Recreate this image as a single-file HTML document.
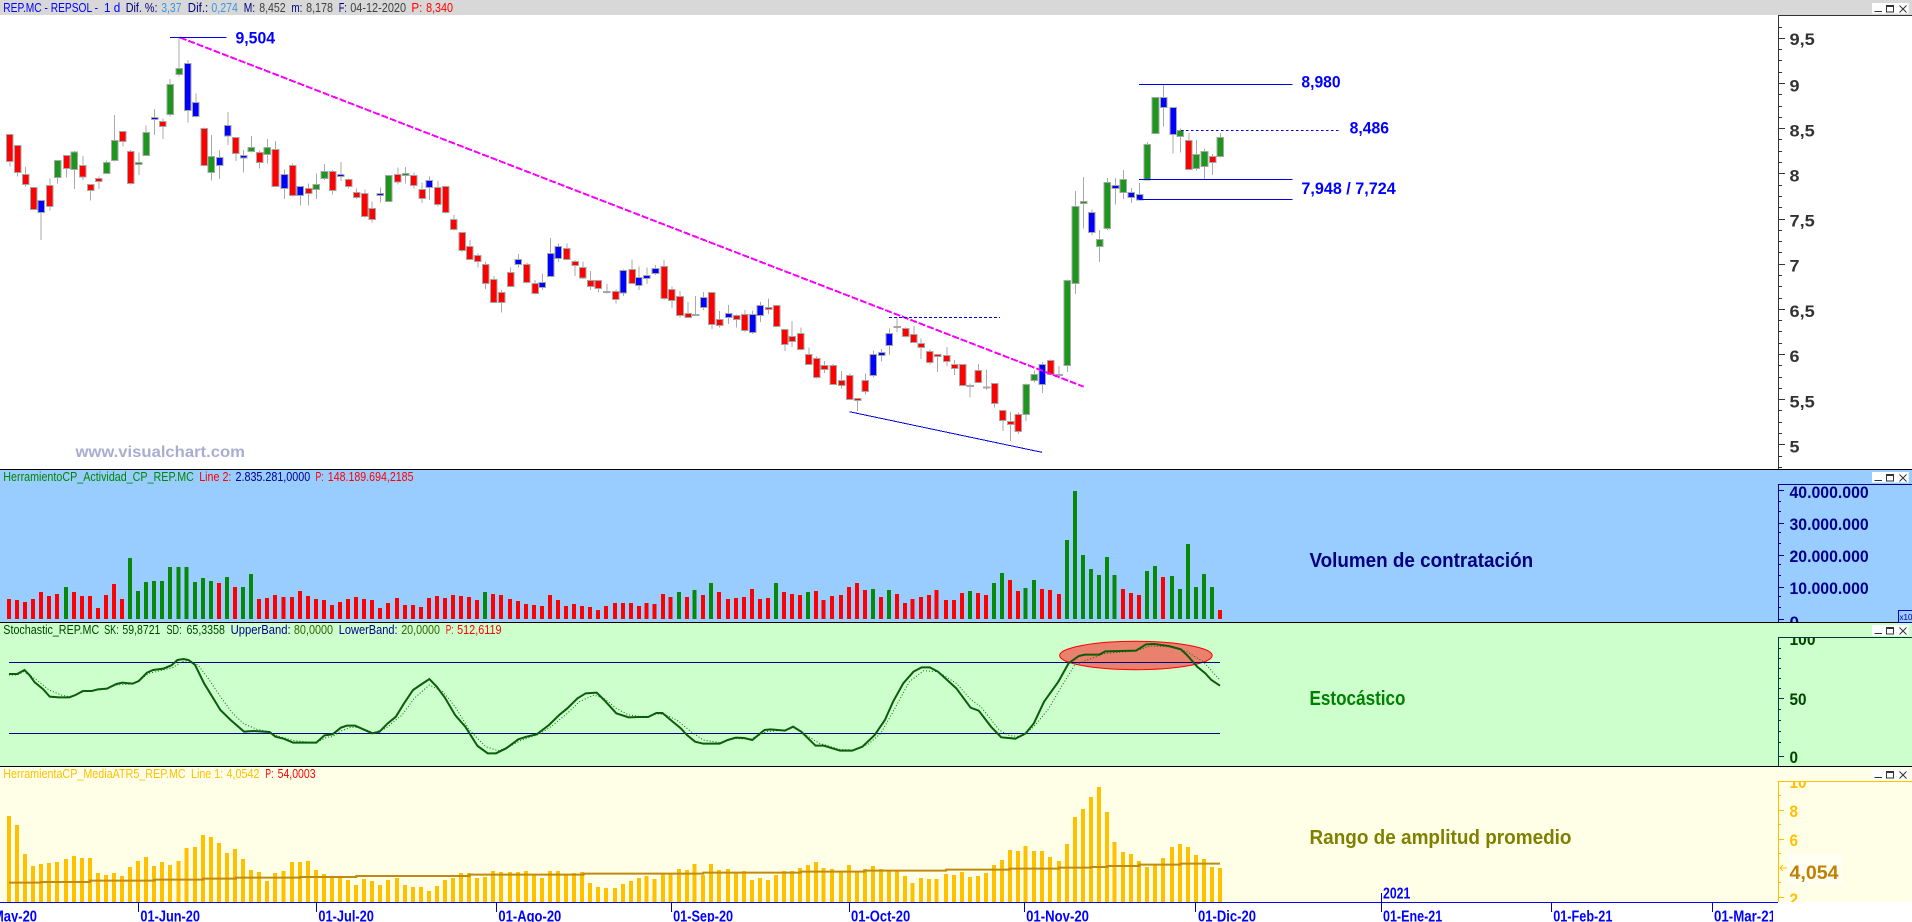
<!DOCTYPE html>
<html lang="es">
<head>
<meta charset="utf-8">
<title>REP.MC - REPSOL</title>
<style>
html,body{margin:0;padding:0;background:#fff;width:1912px;height:922px;overflow:hidden}
svg{display:block;font-family:"Liberation Sans",sans-serif}
svg path{vector-effect:non-scaling-stroke}
.w{fill:none;stroke:#aaa;stroke-width:1;shape-rendering:crispEdges}
.r,.g,.b,.d{stroke:#a6a6a6;stroke-width:1;shape-rendering:crispEdges}
.r{fill:#f00}.g{fill:#1c961c}.b{fill:#00f}.d{fill:#aaa}
.vr,.vg,.ar{fill:none;stroke-width:4;shape-rendering:crispEdges}
.vr{stroke:#f00}.vg{stroke:#088808}.ar{stroke:#ffc000}
.t{font-size:12.5px}
.big{font-size:17px;font-weight:700}
.dt{font-size:16px;font-weight:700;fill:#00f}
.lab{font-size:20px;font-weight:700}
</style>
</head>
<body>
<svg xmlns="http://www.w3.org/2000/svg" width="1912" height="922" viewBox="0 0 1912 922">
<defs>
<clipPath id="c100"><rect x="1780" y="638" width="100" height="30"/></clipPath>
<clipPath id="c10"><rect x="1780" y="782" width="100" height="30"/></clipPath>
<clipPath id="c0"><rect x="1780" y="600" width="100" height="22"/></clipPath>
<clipPath id="c2"><rect x="1780" y="880" width="100" height="22"/></clipPath>
<clipPath id="cm"><rect x="1700" y="903" width="73" height="19"/></clipPath>
<g id="btn">
<rect x="1872" y="3" width="36.7" height="10.5" fill="#fff"/>
<path d="M1874.5 11.5h7.5" stroke="#333" stroke-width="1" fill="none"/>
<path d="M1886.5 5.5h7v6.5h-7zM1886.5 6.5h7" stroke="#333" stroke-width="1" fill="none"/>
<path d="M1899.5 5.5l7 7M1906.5 5.5l-7 7" stroke="#333" stroke-width="1" fill="none"/>
</g>
</defs>

<!-- backgrounds -->
<rect x="0" y="0" width="1912" height="15" fill="#d8d8d8"/>
<rect x="0" y="469" width="1912" height="153" fill="#99ccff"/>
<rect x="0" y="622" width="1912" height="144" fill="#ccffcc"/>
<rect x="0" y="766" width="1912" height="136" fill="#ffffe8"/>
<path d="M0 469.5H1912M0 622.5H1912M0 766.5H1912" stroke="#000" stroke-width="1" fill="none" shape-rendering="crispEdges"/>

<!-- title texts -->
<g class="t">
<text x="3.3" y="12" textLength="94.7" lengthAdjust="spacingAndGlyphs" fill="#0000ff">REP.MC - REPSOL -</text>
<text x="104" y="12" textLength="16.3" lengthAdjust="spacingAndGlyphs" fill="#0000ff">1 d</text>
<text x="125.7" y="12" textLength="31.8" lengthAdjust="spacingAndGlyphs" fill="#000080">Dif. %:</text>
<text x="161.2" y="12" textLength="20.4" lengthAdjust="spacingAndGlyphs" fill="#3c96e0">3,37</text>
<text x="187.8" y="12" textLength="20.4" lengthAdjust="spacingAndGlyphs" fill="#000080">Dif.:</text>
<text x="211.4" y="12" textLength="26.5" lengthAdjust="spacingAndGlyphs" fill="#3c96e0">0,274</text>
<text x="243.7" y="12" textLength="11.4" lengthAdjust="spacingAndGlyphs" fill="#000080">M:</text>
<text x="259.2" y="12" textLength="26.5" lengthAdjust="spacingAndGlyphs" fill="#404040">8,452</text>
<text x="291.4" y="12" textLength="11" lengthAdjust="spacingAndGlyphs" fill="#000080">m:</text>
<text x="306.1" y="12" textLength="26.9" lengthAdjust="spacingAndGlyphs" fill="#404040">8,178</text>
<text x="338.8" y="12" textLength="8.2" lengthAdjust="spacingAndGlyphs" fill="#000080">F:</text>
<text x="350.2" y="12" textLength="55.9" lengthAdjust="spacingAndGlyphs" fill="#404040">04-12-2020</text>
<text x="411.4" y="12" textLength="11" lengthAdjust="spacingAndGlyphs" fill="#f00">P:</text>
<text x="426.1" y="12" textLength="26.9" lengthAdjust="spacingAndGlyphs" fill="#f00">8,340</text>

<text x="3.3" y="481" textLength="190.6" lengthAdjust="spacingAndGlyphs" fill="#008800">HerramientoCP_Actividad_CP_REP.MC</text>
<text x="199.2" y="481" textLength="32.2" lengthAdjust="spacingAndGlyphs" fill="#f00">Line 2:</text>
<text x="235.5" y="481" textLength="74.7" lengthAdjust="spacingAndGlyphs" fill="#00008b">2.835.281,0000</text>
<text x="315.5" y="481" textLength="8.2" lengthAdjust="spacingAndGlyphs" fill="#f00">P:</text>
<text x="327.8" y="481" textLength="85.7" lengthAdjust="spacingAndGlyphs" fill="#f00">148.189.694,2185</text>

<text x="3.3" y="634" textLength="95.9" lengthAdjust="spacingAndGlyphs" fill="#004400">Stochastic_REP.MC</text>
<text x="104.1" y="634" textLength="14.7" lengthAdjust="spacingAndGlyphs" fill="#004400">SK:</text>
<text x="122.4" y="634" textLength="38" lengthAdjust="spacingAndGlyphs" fill="#004400">59,8721</text>
<text x="166.5" y="634" textLength="15.1" lengthAdjust="spacingAndGlyphs" fill="#004400">SD:</text>
<text x="186.5" y="634" textLength="38.4" lengthAdjust="spacingAndGlyphs" fill="#004400">65,3358</text>
<text x="230.6" y="634" textLength="60" lengthAdjust="spacingAndGlyphs" fill="#00008b">UpperBand:</text>
<text x="293.9" y="634" textLength="39.2" lengthAdjust="spacingAndGlyphs" fill="#336600">80,0000</text>
<text x="338.8" y="634" textLength="58.8" lengthAdjust="spacingAndGlyphs" fill="#00008b">LowerBand:</text>
<text x="401.2" y="634" textLength="38.8" lengthAdjust="spacingAndGlyphs" fill="#336600">20,0000</text>
<text x="445.7" y="634" textLength="7.8" lengthAdjust="spacingAndGlyphs" fill="#f00">P:</text>
<text x="457.1" y="634" textLength="44.5" lengthAdjust="spacingAndGlyphs" fill="#f00">512,6119</text>

<text x="3.3" y="778" textLength="182.4" lengthAdjust="spacingAndGlyphs" fill="#ffc000">HerramientaCP_MediaATR5_REP.MC</text>
<text x="191" y="778" textLength="32.2" lengthAdjust="spacingAndGlyphs" fill="#ffc000">Line 1:</text>
<text x="226.5" y="778" textLength="33" lengthAdjust="spacingAndGlyphs" fill="#ffc000">4,0542</text>
<text x="265.3" y="778" textLength="8.2" lengthAdjust="spacingAndGlyphs" fill="#f00">P:</text>
<text x="277.6" y="778" textLength="38" lengthAdjust="spacingAndGlyphs" fill="#f00">54,0003</text>
</g>

<!-- candles: zone 1 -->
<g transform="translate(0,0) scale(.40816,.33333)">
<path class="w" d="M24 403V500M43 436V530M63 501V560M83 562V630M101 602V720M122 535V632M141 481V550M163 465V533M182 453V567M203 468V540M222 553V602M242 530V567M261 481V522M281 345V485M301 393V440M320 450V553M340 458V525M358 377V467M379 327V405M399 355V417M417 237V350M439 112V230M460 180V368M480 280V353M500 382V497M518 405V542M538 450V537M558 336V435M578 412V483M597 450V518M616 408V457M636 452V505M655 417V491M675 423V560M697 508V597M717 490V590M736 558V617M756 550V617M775 520V597M795 492V540M815 510V583M835 486V543M854 535V565M874 565V597M894 568V653M912 604V668M932 563V608M952 525V605M975 502V554M994 501V550M1014 518V566M1034 548V609M1052 530V600M1073 543V620M1092 558V640M1112 645V692M1132 697V756"/>
<path class="r" d="M16 403h16V484h-16zM35 436h16V517h-16zM55 523h16V553h-16zM75 562h16V628h-16zM114 556h16V619h-16zM155 466h16V505h-16zM195 496h16V531h-16zM214 553h16V571h-16zM234 535h16V544h-16zM293 394h16V424h-16zM312 454h16V550h-16zM391 364h16V379h-16zM492 385h16V496h-16zM570 412h16V460h-16zM628 457h16V487h-16zM667 448h16V559h-16zM709 496h16V586h-16zM748 566h16V580h-16zM807 514h16V571h-16zM846 538h16V559h-16zM866 577h16V592h-16zM886 580h16V649h-16zM904 626h16V658h-16zM967 524h16V546h-16zM1006 526h16V556h-16zM1026 568h16V595h-16zM1065 562h16V613h-16zM1084 560h16V637h-16zM1104 658h16V688h-16zM1124 697h16V751h-16z"/>
<path class="g" d="M133 481h16V533h-16zM174 456h16V508h-16zM253 488h16V520h-16zM273 421h16V481h-16zM332 487h16V493h-16zM350 397h16V466h-16zM409 253h16V343h-16zM431 205h16V223h-16zM510 469h16V517h-16zM608 442h16V454h-16zM647 442h16V463h-16zM767 553h16V568h-16zM787 514h16V535h-16zM944 526h16V604h-16zM986 520h16V526h-16z"/>
<path class="b" d="M93 602h16V637h-16zM371 352h16V358h-16zM452 190h16V331h-16zM472 308h16V349h-16zM530 472h16V496h-16zM550 377h16V408h-16zM589 466h16V474h-16zM689 523h16V565h-16zM728 560h16V586h-16zM827 523h16V529h-16zM924 580h16V586h-16zM1044 541h16V562h-16z"/>
</g>
<!-- candles: zone 2 -->
<g transform="translate(0,240) scale(.40816,.33333)">
<path class="w" d="M1151 0V60M1171 40V83M1190 64V147M1210 108V188M1229 150V218M1251 82V140M1270 42V83M1291 67V130M1311 120V163M1329 100V148M1349 -6V110M1368 10V66M1389 10V60M1409 60V108M1428 65V117M1447 93V150M1466 120V158M1487 132V160M1509 148V190M1527 88V168M1549 58V132M1565 80V150"/>
<path class="r" d="M1143 19h16V58h-16zM1163 46h16V64h-16zM1182 73h16V130h-16zM1202 118h16V187h-16zM1221 157h16V187h-16zM1243 97h16V139h-16zM1283 73h16V127h-16zM1303 131h16V160h-16zM1381 26h16V58h-16zM1401 64h16V76h-16zM1420 83h16V114h-16zM1439 121h16V139h-16zM1458 121h16V145h-16zM1501 155h16V178h-16zM1541 89h16V130h-16z"/>
<path class="b" d="M1262 58h16V73h-16zM1321 127h16V142h-16zM1341 41h16V109h-16zM1360 20h16V55h-16zM1519 92h16V159h-16zM1557 113h16V137h-16z"/>
<path class="d" d="M1479 154h16V158h-16z"/>
</g>
<!-- candles: zone 3 -->
<g transform="translate(640,240) scale(.40816,.33333)">
<path class="w" d="M17 82V132M38 75V105M59 60V180M78 140V204M98 153V233M118 186V233M136 168V228M156 156V210M176 157V267M195 213V262M217 195V252M237 224V262M257 210V276M276 212V282M295 186V246M315 175V222M335 195V260M355 268V333M373 243V321M394 262V332M414 322V374M433 349V416M452 363V399M473 372V434M494 393V446M514 400V479M533 474V513M552 400V464M572 331V413M592 327V365M611 265V345M630 232V276M651 262V292M671 258V308M689 295V357M710 328V374M729 342V396M752 321V378M771 360V405M791 372V437M809 430V473M829 372V428M849 388V450M869 430V503M889 510V573M908 516V603M927 517V582M946 430V543M966 391V428M986 366V459M1006 358V405M1027 378V415M1047 118V396"/>
<path class="r" d="M51 80h16V175h-16zM70 149h16V181h-16zM90 170h16V227h-16zM110 221h16V232h-16zM168 158h16V253h-16zM187 238h16V257h-16zM229 226h16V238h-16zM249 224h16V272h-16zM307 203h16V208h-16zM327 197h16V260h-16zM347 268h16V313h-16zM365 290h16V304h-16zM386 280h16V328h-16zM406 344h16V373h-16zM425 356h16V412h-16zM444 376h16V388h-16zM465 376h16V433h-16zM486 421h16V436h-16zM506 406h16V478h-16zM525 476h16V482h-16zM544 422h16V454h-16zM643 266h16V289h-16zM663 283h16V307h-16zM681 310h16V323h-16zM702 335h16V367h-16zM721 344h16V349h-16zM744 347h16V365h-16zM763 374h16V385h-16zM783 373h16V436h-16zM821 392h16V427h-16zM861 431h16V490h-16zM881 512h16V541h-16zM900 545h16V553h-16zM919 524h16V574h-16zM998 362h16V403h-16z"/>
<path class="b" d="M9 106h16V115h-16zM30 85h16V100h-16zM148 173h16V203h-16zM209 221h16V233h-16zM268 224h16V278h-16zM287 196h16V226h-16zM564 344h16V406h-16zM584 338h16V346h-16zM603 280h16V316h-16zM978 373h16V433h-16z"/>
<path class="g" d="M938 434h16V523h-16zM958 404h16V421h-16zM1039 122h16V376h-16z"/>
<path class="d" d="M128 223h16V227h-16zM622 259h16V263h-16zM801 436h16V439h-16zM841 441h16V444h-16zM1019 403h16V407h-16z"/>
</g>
<!-- candles: zone 4 -->
<g transform="translate(640,0) scale(.40816,.33333)">
<path class="w" d="M1067 573V882M1087 531V686M1107 628V705M1126 690V786M1145 534V690M1165 534V614M1184 510V597M1204 564V609M1224 549V600M1243 426V542M1263 292V400M1283 253V380M1306 322V461M1324 385V458M1345 399V509M1363 420V512M1383 445V540M1403 462V525M1422 399V473"/>
<path class="g" d="M1059 619h16V850h-16zM1079 604h16V610h-16zM1118 718h16V739h-16zM1137 547h16V686h-16zM1176 538h16V577h-16zM1235 433h16V540h-16zM1255 292h16V400h-16zM1316 391h16V409h-16zM1355 463h16V505h-16zM1375 454h16V499h-16zM1414 412h16V469h-16z"/>
<path class="b" d="M1099 637h16V697h-16zM1157 556h16V566h-16zM1196 577h16V593h-16zM1216 583h16V600h-16zM1275 292h16V322h-16zM1298 322h16V403h-16z"/>
<path class="r" d="M1337 422h16V508h-16zM1395 470h16V487h-16z"/>
</g>

<!-- annotations main -->
<path d="M180 37.5L1083.7 386.7" stroke="#ff00ff" stroke-width="2" stroke-dasharray="7 2" fill="none" shape-rendering="crispEdges"/>
<path d="M170 37.5H226.5M1139 84.5H1292.4M1139 179.5H1292.4M1139 199.5H1292.4" stroke="#0000e6" stroke-width="1" fill="none" shape-rendering="crispEdges"/>
<path d="M1180.8 130.5H1339.3" stroke="#0000e6" stroke-width="1" stroke-dasharray="2.5 2.5" fill="none" shape-rendering="crispEdges"/>
<path d="M889 317.5H1000" stroke="#0000e6" stroke-width="1" stroke-dasharray="3 2" fill="none" shape-rendering="crispEdges"/>
<path d="M849.4 411.7L1042 452.3" stroke="#0000e6" stroke-width="1" fill="none" shape-rendering="crispEdges"/>
<text x="235.5" y="43.3" class="big" fill="#00f" textLength="39.5" lengthAdjust="spacingAndGlyphs">9,504</text>
<text x="1301.4" y="87.3" class="big" fill="#00f" textLength="39.2" lengthAdjust="spacingAndGlyphs">8,980</text>
<text x="1349.6" y="133.3" class="big" fill="#00f" textLength="39.4" lengthAdjust="spacingAndGlyphs">8,486</text>
<text x="1301.4" y="194" class="big" fill="#00f" textLength="94.3" lengthAdjust="spacingAndGlyphs">7,948 / 7,724</text>
<text x="75.5" y="457" font-size="16" font-weight="700" fill="#a9add0" textLength="169.4" lengthAdjust="spacingAndGlyphs">www.visualchart.com</text>

<!-- main axis -->
<path d="M1778.5 15V469M1778 15.5H1912" stroke="#333" fill="none" shape-rendering="crispEdges"/>
<path d="M1778 38.5h7M1778 83.5h7M1778 128.5h7M1778 173.5h7M1778 219.5h7M1778 264.5h7M1778 309.5h7M1778 354.5h7M1778 399.5h7M1778 444.5h7M1778 27.5h4M1778 49.5h4M1778 60.5h4M1778 72.5h4M1778 94.5h4M1778 106.5h4M1778 117.5h4M1778 139.5h4M1778 151.5h4M1778 162.5h4M1778 185.5h4M1778 196.5h4M1778 207.5h4M1778 230.5h4M1778 241.5h4M1778 252.5h4M1778 275.5h4M1778 286.5h4M1778 298.5h4M1778 320.5h4M1778 331.5h4M1778 343.5h4M1778 365.5h4M1778 377.5h4M1778 388.5h4M1778 410.5h4M1778 422.5h4M1778 433.5h4M1778 456.5h4M1778 467.5h4" stroke="#333" fill="none" shape-rendering="crispEdges"/>
<g class="big" fill="#333">
<text x="1789.5" y="45" textLength="25.3" lengthAdjust="spacingAndGlyphs">9,5</text>
<text x="1789.5" y="91.5" textLength="10" lengthAdjust="spacingAndGlyphs">9</text>
<text x="1789.5" y="136.5" textLength="25.3" lengthAdjust="spacingAndGlyphs">8,5</text>
<text x="1789.5" y="181.5" textLength="10" lengthAdjust="spacingAndGlyphs">8</text>
<text x="1789.5" y="226.5" textLength="25.3" lengthAdjust="spacingAndGlyphs">7,5</text>
<text x="1789.5" y="271.5" textLength="10" lengthAdjust="spacingAndGlyphs">7</text>
<text x="1789.5" y="317" textLength="25.3" lengthAdjust="spacingAndGlyphs">6,5</text>
<text x="1789.5" y="362" textLength="10" lengthAdjust="spacingAndGlyphs">6</text>
<text x="1789.5" y="407.5" textLength="25.3" lengthAdjust="spacingAndGlyphs">5,5</text>
<text x="1789.5" y="452.5" textLength="10" lengthAdjust="spacingAndGlyphs">5</text>
</g>

<!-- volume -->
<g transform="translate(0,460) scale(.40816,.33333)">
<path class="vr" d="M22 477V417M42 477V420M61 477V426M81 477V417M101 477V396M120 477V408M140 477V402M181 477V396M201 477V408M220 477V408M240 477V444M260 477V405M279 477V372M299 477V417M537 477V369M576 477V381M635 477V417M654 477V414M674 477V405M694 477V411M715 477V411M735 477V393M754 477V408M774 477V417M794 477V420M813 477V435M833 477V426M852 477V417M872 477V411M892 477V417M912 477V420M931 477V444M951 477V429M973 477V414M992 477V435M1012 477V435M1032 477V441M1051 477V414M1071 477V408M1090 477V414M1110 477V405M1130 477V408M1149 477V411M1169 477V420M1208 477V402M1227 477V405M1249 477V417M1269 477V423M1289 477V432M1308 477V435M1328 477V438M1348 477V405M1367 477V420M1387 477V438M1406 477V432M1426 477V438M1446 477V441M1465 477V450M1485 477V438M1507 477V429M1526 477V429M1546 477V429M1565 477V438"/>
<path class="vg" d="M162 477V381M319 477V294M338 477V393M358 477V366M377 477V363M397 477V363M417 477V321M437 477V321M457 477V321M478 477V366M497 477V354M517 477V363M556 477V351M595 477V381M615 477V342M1188 477V396"/>
</g>
<g transform="translate(640,460) scale(.40816,.33333)">
<path class="vr" d="M16 477V429M36 477V432M56 477V402M75 477V411M115 477V411M154 477V405M193 477V396M215 477V417M235 477V414M255 477V411M274 477V387M294 477V417M313 477V414M353 477V396M372 477V402M392 477V405M431 477V393M450 477V420M470 477V408M492 477V405M512 477V381M532 477V369M551 477V390M590 477V411M630 477V402M649 477V429M668 477V417M688 477V411M708 477V405M727 477V390M750 477V420M769 477V420M789 477V399M828 477V399M848 477V405M906 477V360M926 477V393M985 477V387M1004 477V390M1026 477V402M1183 477V387M1203 477V399M1222 477V405M1281 477V351M1421 477V450"/>
<path class="vg" d="M95 477V396M134 477V390M174 477V369M333 477V369M411 477V396M571 477V387M610 477V390M808 477V393M867 477V369M887 477V339M945 477V384M965 477V360M1046 477V240M1066 477V93M1085 477V285M1105 477V327M1124 477V345M1144 477V291M1163 477V345M1242 477V333M1262 477V318M1303 477V348M1323 477V387M1342 477V252M1362 477V381M1382 477V342M1401 477V381"/>
</g>
<text x="1309.5" y="567" class="lab" fill="#000080" textLength="223.7" lengthAdjust="spacingAndGlyphs">Volumen de contratación</text>
<path d="M1778.5 484V622M1778 484.5H1912" stroke="#00008b" fill="none" shape-rendering="crispEdges"/>
<path d="M1778 490.5h6M1778 523.5h6M1778 555.5h6M1778 587.5h6M1778 619.5h6M1778 501.5h3M1778 511.5h3M1778 532.5h3M1778 543.5h3M1778 564.5h3M1778 575.5h3M1778 596.5h3M1778 607.5h3" stroke="#00008b" fill="none" shape-rendering="crispEdges"/>
<g class="big" fill="#00008b">
<text x="1789.5" y="498" textLength="79.2" lengthAdjust="spacingAndGlyphs">40.000.000</text>
<text x="1789.5" y="530" textLength="79.2" lengthAdjust="spacingAndGlyphs">30.000.000</text>
<text x="1789.5" y="562" textLength="79.2" lengthAdjust="spacingAndGlyphs">20.000.000</text>
<text x="1789.5" y="594" textLength="79.2" lengthAdjust="spacingAndGlyphs">10.000.000</text>
<text x="1789.5" y="628" clip-path="url(#c0)">0</text>
</g>
<rect x="1898.5" y="610.5" width="14" height="12" fill="none" stroke="#0000c0"/>
<text x="1899.5" y="620" font-size="8" fill="#00008b">x10</text>

<!-- stochastic -->
<ellipse cx="1135.9" cy="655.5" rx="76.3" ry="14.2" fill="#ea806e" stroke="#f00" stroke-width="1"/>
<path d="M9 662.5H1220M9 733.5H1220" stroke="#00008b" fill="none" shape-rendering="crispEdges"/>
<g transform="translate(0,620) scale(.40816,.33333)" fill="none">
<path stroke="#0a6a0a" stroke-width="1" stroke-dasharray="1 2" d="M22 165 42 165 58 155 72 165 90 180 120 210 150 225 170 230 185 225 205 215 240 210 262 205 285 195 325 192 345 178 365 160 400 150 425 142 445 125 465 122 485 135 510 175 540 230 570 280 598 312 630 328 660 335 680 348 720 362 775 368 800 352 815 350 835 333 860 322 880 322 915 338 945 325 985 285 1015 235 1052 195 1085 215 1115 260 1150 330 1190 380 1220 392 1240 385 1275 362 1320 343 1350 320 1390 280 1420 245 1455 225 1480 235 1510 265 1540 285 1568 289"/>
<path stroke="#0b5d0b" stroke-width="2" d="M22 162 42 162 60 150 72 165 85 187 105 207 122 230 145 232 170 232 185 225 203 213 225 213 240 208 262 206 285 192 300 188 325 191 340 183 360 158 375 150 400 146 420 136 435 120 450 117 462 120 478 135 500 190 520 230 540 270 565 300 598 335 620 333 660 336 675 350 695 356 718 368 775 368 795 346 815 343 835 323 850 317 870 317 890 328 912 340 930 335 950 310 970 290 990 250 1012 210 1030 195 1052 177 1070 200 1090 233 1115 285 1140 320 1170 378 1195 400 1215 400 1240 385 1270 358 1290 350 1315 343 1345 315 1370 285 1390 265 1415 235 1435 220 1462 218 1480 240 1510 280 1540 292 1568 291"/>
</g>
<g transform="translate(640,620) scale(.40816,.33333)" fill="none">
<path stroke="#0a6a0a" stroke-width="1" stroke-dasharray="1 2" d="M0 289 20 289 40 282 60 283 90 300 125 335 155 360 195 368 230 355 270 358 310 335 355 330 375 322 410 348 440 370 490 388 520 390 560 372 590 340 620 275 660 185 695 152 730 155 775 190 810 238 835 260 880 330 905 347 935 350 965 320 1000 268 1035 195 1065 135 1100 118 1140 100 1215 93 1250 78 1295 80 1340 95 1380 125 1421 180"/>
<path stroke="#0b5d0b" stroke-width="2" d="M0 291 20 291 40 279 55 279 80 305 100 325 115 345 135 365 155 371 195 371 215 360 235 353 255 354 275 360 305 330 320 328 355 332 375 320 395 335 430 377 450 377 490 392 520 392 545 380 575 345 600 300 620 245 645 190 670 155 690 142 710 142 730 155 775 205 810 263 830 272 860 320 885 352 920 356 945 340 965 310 990 245 1025 185 1050 130 1075 108 1090 104 1125 104 1140 94 1215 92 1240 73 1260 72 1295 78 1325 88 1340 105 1365 140 1385 160 1400 180 1421 197"/>
</g>
<text x="1309.5" y="705" class="lab" fill="#008000" textLength="96" lengthAdjust="spacingAndGlyphs">Estocástico</text>
<path d="M1778.5 637V766M1778 637.5H1912" stroke="#003c3c" fill="none" shape-rendering="crispEdges"/>
<path d="M1778 698.5h6M1778 756.5h6M1778 648.5h3M1778 658.5h3M1778 668.5h3M1778 678.5h3M1778 688.5h3M1778 709.5h3M1778 720.5h3M1778 731.5h3M1778 742.5h3" stroke="#003c3c" fill="none" shape-rendering="crispEdges"/>
<g class="big" fill="#004400">
<text x="1789.5" y="645" textLength="26" lengthAdjust="spacingAndGlyphs" clip-path="url(#c100)">100</text>
<text x="1789.5" y="705" textLength="17" lengthAdjust="spacingAndGlyphs">50</text>
<text x="1789.5" y="763" textLength="8.5" lengthAdjust="spacingAndGlyphs">0</text>
</g>

<!-- ATR -->
<g transform="translate(0,620) scale(.40816,.33333)">
<path class="ar" d="M22 847V588M42 847V615M61 847V702M81 847V738M101 847V732M120 847V729M140 847V726M162 847V717M181 847V708M201 847V714M220 847V714M240 847V759M260 847V765M279 847V759M299 847V768M319 847V741M338 847V723M358 847V711M377 847V738M397 847V726M417 847V735M437 847V723M457 847V684M478 847V681M497 847V645M517 847V651M537 847V669M556 847V699M576 847V687M595 847V717M615 847V750M635 847V756M654 847V783M674 847V759M694 847V753M715 847V726M735 847V726M754 847V723M774 847V750M794 847V762M813 847V771M833 847V771M852 847V780M872 847V795M892 847V777M912 847V783M931 847V795M951 847V780M973 847V774M992 847V795M1012 847V801M1032 847V801M1051 847V813M1071 847V798M1090 847V780M1110 847V774M1130 847V759M1149 847V759M1169 847V774M1188 847V771M1208 847V753M1227 847V756M1249 847V756M1269 847V756M1289 847V753M1308 847V762M1328 847V774M1348 847V753M1367 847V753M1387 847V765M1406 847V759M1426 847V756M1446 847V789M1465 847V801M1485 847V804M1507 847V804M1526 847V792M1546 847V783M1565 847V774"/>
<path fill="none" stroke="#c08a10" stroke-width="2" d="M22 788H100V786H220V782H378V779H498V776H578V773H735V771H873V768H1150V764H1430V761H1568"/>
</g>
<g transform="translate(640,620) scale(.40816,.33333)">
<path class="ar" d="M16 847V768M36 847V777M56 847V762M75 847V762M95 847V747M115 847V750M134 847V732M154 847V765M174 847V732M193 847V750M215 847V747M235 847V759M255 847V753M274 847V780M294 847V774M313 847V780M333 847V765M353 847V753M372 847V753M392 847V744M411 847V735M431 847V726M450 847V744M470 847V747M492 847V756M512 847V735M532 847V753M551 847V747M571 847V738M590 847V747M610 847V753M630 847V753M649 847V768M668 847V789M688 847V774M708 847V777M727 847V777M750 847V762M769 847V765M789 847V756M808 847V771M828 847V768M848 847V759M867 847V735M887 847V720M906 847V690M926 847V693M945 847V678M965 847V693M985 847V693M1004 847V711M1026 847V723M1046 847V672M1066 847V591M1085 847V567M1105 847V531M1124 847V501M1144 847V576M1163 847V666M1183 847V696M1203 847V702M1222 847V723M1242 847V741M1262 847V735M1281 847V714M1303 847V681M1323 847V672M1342 847V681M1362 847V705M1382 847V717M1401 847V741M1421 847V744"/>
<path fill="none" stroke="#c08a10" stroke-width="2" d="M0 761H155V758H393V755H550V752H750V749H906V746H1027V743H1105V741H1145V738H1223V734H1324V731H1421"/>
</g>
<text x="1309.5" y="844" class="lab" fill="#808000" textLength="262" lengthAdjust="spacingAndGlyphs">Rango de amplitud promedio</text>
<path d="M1778.5 781V902M1778 781.5H1912" stroke="#ffc000" fill="none" shape-rendering="crispEdges"/>
<path d="M1778 810.5h6M1778 839.5h6M1778 897.5h6M1778 795.5h3M1778 824.5h3M1778 853.5h3M1778 882.5h3" stroke="#ffc000" fill="none" shape-rendering="crispEdges"/>
<path d="M1780 868h7M1783 865l-3 3 3 3" stroke="#ffc000" fill="none"/>
<g class="big" fill="#ffc000">
<text x="1789.5" y="788" textLength="17" lengthAdjust="spacingAndGlyphs" clip-path="url(#c10)">10</text>
<text x="1789.5" y="817" textLength="8.5" lengthAdjust="spacingAndGlyphs">8</text>
<text x="1789.5" y="846" textLength="8.5" lengthAdjust="spacingAndGlyphs">6</text>
<text x="1789.5" y="905" textLength="8.5" lengthAdjust="spacingAndGlyphs" clip-path="url(#c2)">2</text>
</g>
<rect x="1788" y="854" width="54.6" height="29" fill="#fffff4"/>
<text x="1789.5" y="879" font-size="19.5" font-weight="700" fill="#c08000" textLength="49" lengthAdjust="spacingAndGlyphs">4,054</text>

<!-- date axis -->
<path d="M0 902.5H1778" stroke="#0000ff" fill="none" shape-rendering="crispEdges"/>
<path d="M138.5 902V912M316.5 902V912M496.5 902V912M671.5 902V912M849.5 902V912M1024.5 902V912M1195.5 902V912M1381.5 893V912M1551.5 902V912M1712.5 902V912" stroke="#0000c0" fill="none" shape-rendering="crispEdges"/>
<g class="dt">
<text x="-7" y="921.5" textLength="44" lengthAdjust="spacingAndGlyphs">May-20</text>
<text x="140.4" y="921.5" textLength="59.6" lengthAdjust="spacingAndGlyphs">01-Jun-20</text>
<text x="318.4" y="921.5" textLength="55.5" lengthAdjust="spacingAndGlyphs">01-Jul-20</text>
<text x="498.4" y="921.5" textLength="62.9" lengthAdjust="spacingAndGlyphs">01-Ago-20</text>
<text x="673.1" y="921.5" textLength="60" lengthAdjust="spacingAndGlyphs">01-Sep-20</text>
<text x="851" y="921.5" textLength="59.2" lengthAdjust="spacingAndGlyphs">01-Oct-20</text>
<text x="1026.1" y="921.5" textLength="62.9" lengthAdjust="spacingAndGlyphs">01-Nov-20</text>
<text x="1198" y="921.5" textLength="58" lengthAdjust="spacingAndGlyphs">01-Dic-20</text>
<text x="1383" y="921.5" textLength="59.2" lengthAdjust="spacingAndGlyphs">01-Ene-21</text>
<text x="1553.2" y="921.5" textLength="59.2" lengthAdjust="spacingAndGlyphs">01-Feb-21</text>
<text x="1714" y="921.5" textLength="62" lengthAdjust="spacingAndGlyphs" clip-path="url(#cm)">01-Mar-21</text>
<text x="1383" y="898.5" textLength="27.3" lengthAdjust="spacingAndGlyphs">2021</text>
</g>

<!-- window buttons -->
<use href="#btn"/>
<use href="#btn" transform="translate(0,469)"/>
<use href="#btn" transform="translate(0,622)"/>
<use href="#btn" transform="translate(0,766)"/>
</svg>
</body>
</html>
